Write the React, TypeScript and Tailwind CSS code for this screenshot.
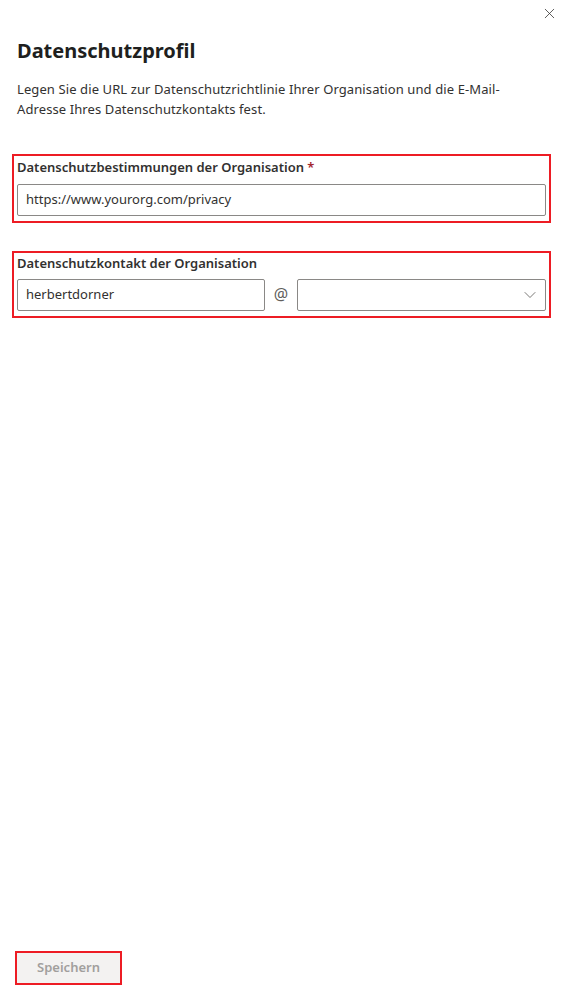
import { X, ChevronDown } from 'lucide-react';

export default function App() {
  return (
    <div className="relative flex h-[990px] w-[563px] flex-col bg-white font-['Noto_Sans',sans-serif] text-[#323130]">
      <button className="absolute right-[5px] top-[4px] flex h-[18px] w-[18px] items-center justify-center text-[#323130]">
        <X size={17} strokeWidth={1.1} />
      </button>

      <div className="px-[17px] pt-[38px]">
        <h1 className="text-[20px] font-bold leading-[26px] text-[#201f1e]">Datenschutzprofil</h1>
        <p className="mt-[15px] text-[13px] leading-[20px] tracking-[0.1px] text-[#323130]">
          Legen Sie die URL zur Datenschutzrichtlinie Ihrer Organisation und die E-Mail-
          <br />
          Adresse Ihres Datenschutzkontakts fest.
        </p>
      </div>

      <div className="mx-[12px] mt-[35px] border-2 border-[#ed1c24] px-[3px] pb-[5px] pt-[1px]">
        <label className="block text-[13px] font-semibold leading-[20px]">
          Datenschutzbestimmungen der Organisation <span className="text-[#a4262c]">*</span>
        </label>
        <div className="mt-[7px] flex h-[32px] items-center rounded-[2px] border border-[#8a8886] px-[8px] text-[13px]">
          https://www.yourorg.com/privacy
        </div>
      </div>

      <div className="mx-[12px] mt-[28px] border-2 border-[#ed1c24] px-[3px] pb-[5px] pt-[0px]">
        <label className="block text-[13px] font-semibold leading-[20px]">Datenschutzkontakt der Organisation</label>
        <div className="mt-[6px] flex items-center">
          <div className="flex h-[32px] w-[248px] items-center rounded-[2px] border border-[#8a8886] px-[8px] text-[13px]">
            herbertdorner
          </div>
          <span className="w-[32px] pb-[3px] text-center text-[16px] text-[#605e5c]">@</span>
          <div className="flex h-[32px] flex-1 items-center justify-end rounded-[2px] border border-[#8a8886] pr-[5px] text-[#605e5c]">
            <ChevronDown size={20} strokeWidth={1} />
          </div>
        </div>
      </div>

      <div className="flex-1" />

      <div className="mb-[5px] ml-[15px] w-fit border-2 border-[#ed1c24]">
        <button className="flex h-[30px] w-[103px] items-center justify-center bg-[#f3f2f1] text-[13px] font-semibold text-[#a19f9d]">
          Speichern
        </button>
      </div>
    </div>
  );
}
